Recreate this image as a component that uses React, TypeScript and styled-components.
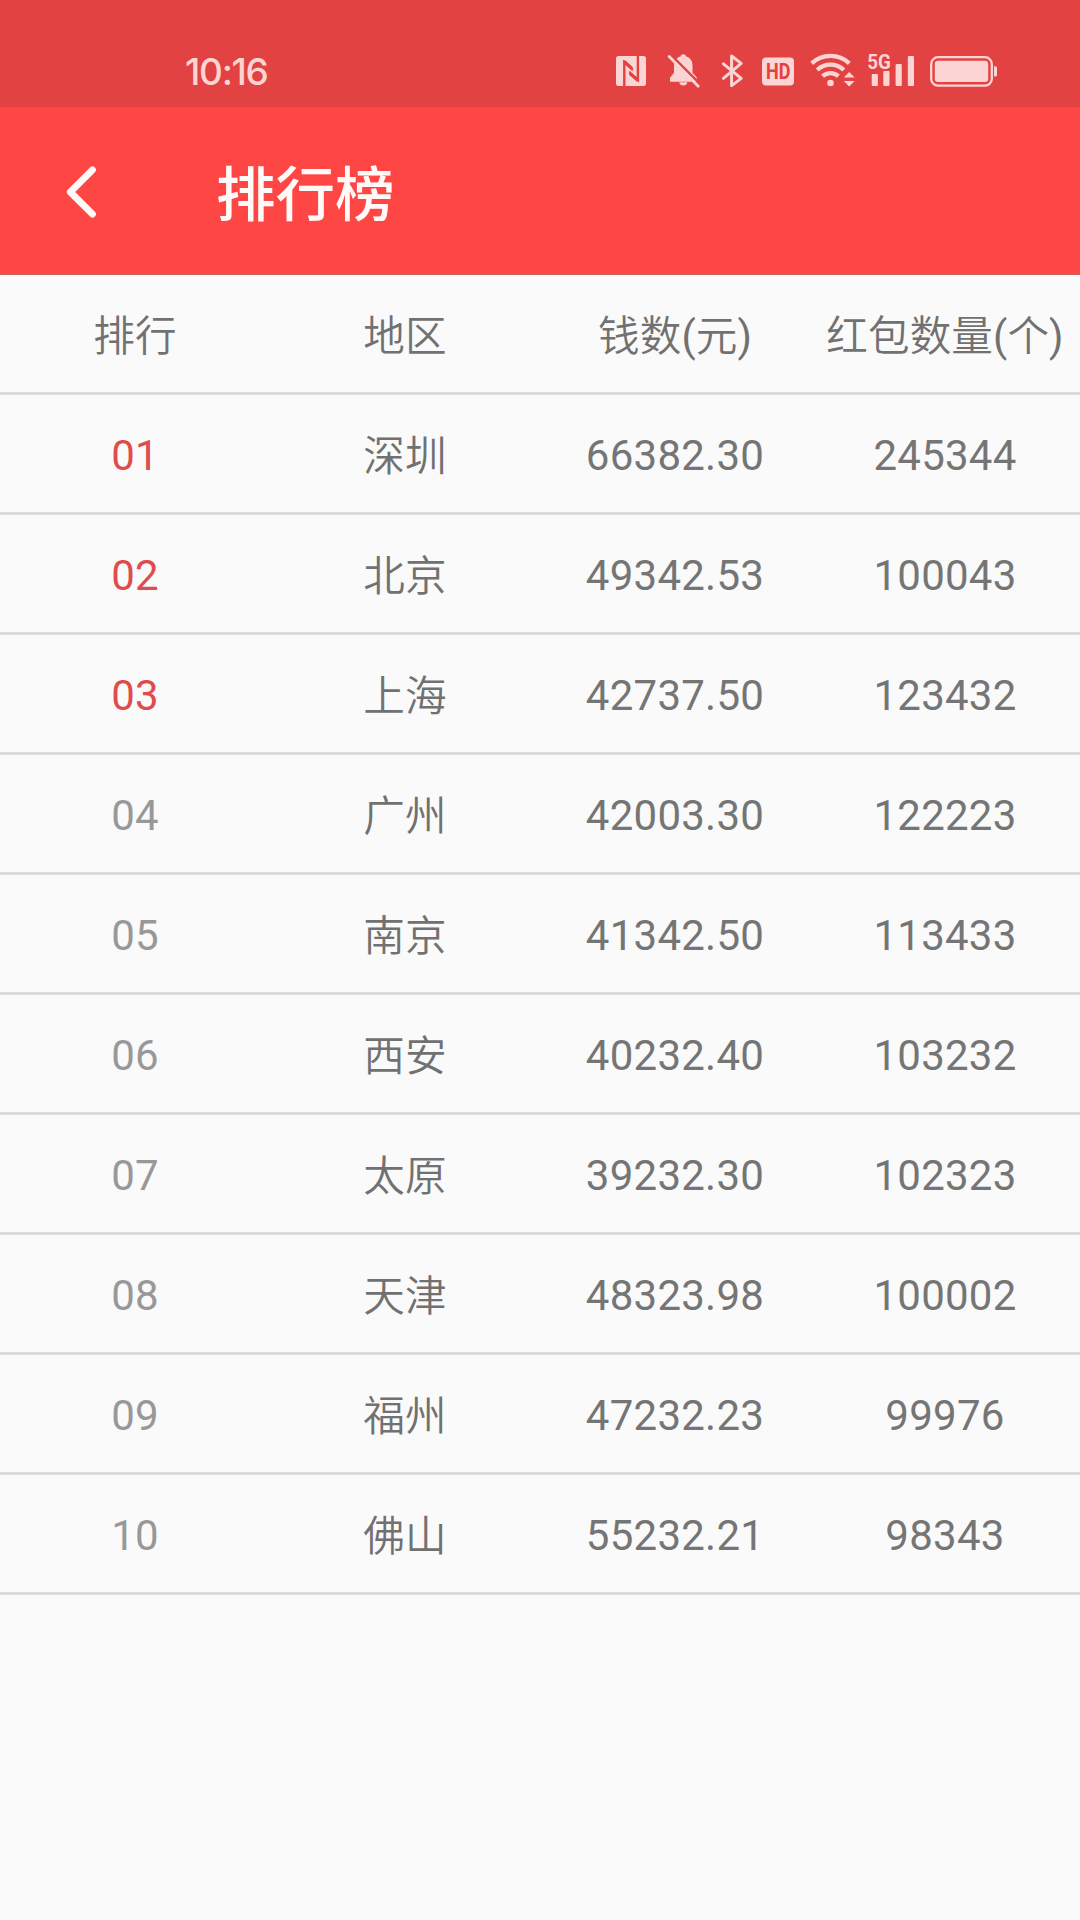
import React from "react";
import styled, { createGlobalStyle } from "styled-components";

const INK = "#fcd4d3";
const BAR = "#e24241";

const GlobalStyle = createGlobalStyle`
  body {
    margin: 0;
    background: #fafafa;
  }
`;

const Screen = styled.div`
  display: flex;
  flex-direction: column;
  width: 1080px;
  height: 1920px;
  overflow: hidden;
  background: #fafafa;
  font-family: Roboto, "Noto Sans CJK SC", sans-serif;
`;

const StatusBar = styled.div`
  display: flex;
  align-items: center;
  justify-content: space-between;
  box-sizing: border-box;
  height: 107px;
  padding: 35px 83px 0 185px;
  background: ${BAR};
`;

const Clock = styled.span`
  padding-top: 1px;
  font-family: Inter, sans-serif;
  font-size: 37px;
  font-weight: 500;
  line-height: 44px;
  letter-spacing: -1.3px;
  color: ${INK};
`;

const StatusIcons = styled.div`
  display: flex;
  align-items: center;
`;

const Glyph = styled.svg<{ $gap?: number }>`
  display: block;
  flex: none;
  height: 40px;
  margin-left: ${(p) => p.$gap ?? 0}px;
  fill: ${INK};
`;

const AppBar = styled.header`
  display: flex;
  align-items: center;
  box-sizing: border-box;
  height: 168px;
  padding: 3px 0 0 60px;
  background: #fe4645;
  border-bottom: 1px solid #c8605d;
`;

const BackButton = styled.button`
  display: flex;
  width: 156px;
  padding: 0;
  border: 0;
  background: none;
`;

const Title = styled.h1`
  margin: 0;
  padding-top: 7px;
  font-size: 59.5px;
  font-weight: 500;
  line-height: 80px;
  color: #fffaf8;
`;

const Table = styled.div`
  display: flex;
  flex-direction: column;
`;

const Row = styled.div`
  display: grid;
  grid-template-columns: repeat(4, 270px);
  align-items: center;
  box-sizing: border-box;
  height: 120px;
  border-bottom: 3px solid #dcdcdc;
`;

const Cell = styled.span`
  padding-top: 4px;
  font-size: 42px;
  line-height: 60px;
  letter-spacing: 0.25px;
  text-align: center;
  white-space: nowrap;
  color: #757575;
`;

const Rank = styled(Cell)<{ $top: boolean }>`
  color: ${(p) => (p.$top ? "#e04c4c" : "#989898")};
`;

const Label = styled(Cell)`
  padding-top: 7px;
  font-size: 41.6px;
  font-weight: 350;
  letter-spacing: 0.1px;
  color: #717171;
`;

const Bracket = styled.span`
  font-weight: 400;
`;

const HEADINGS: { name: string; unit?: string }[] = [
  { name: "排行" },
  { name: "地区" },
  { name: "钱数", unit: "元" },
  { name: "红包数量", unit: "个" },
];

const RANKING: [string, string, string][] = [
  ["深圳", "66382.30", "245344"],
  ["北京", "49342.53", "100043"],
  ["上海", "42737.50", "123432"],
  ["广州", "42003.30", "122223"],
  ["南京", "41342.50", "113433"],
  ["西安", "40232.40", "103232"],
  ["太原", "39232.30", "102323"],
  ["天津", "48323.98", "100002"],
  ["福州", "47232.23", "99976"],
  ["佛山", "55232.21", "98343"],
];

const NfcIcon = () => (
  <Glyph width="30" viewBox="0 0 30 40">
    <rect y="5" width="30" height="30" rx="2.5" />
    <g fill="none" stroke={BAR} strokeWidth="2.4">
      <path d="M8.3 35V11.2L16.6 18.6" />
      <path d="M21.9 5V28.8L13.4 21.4" />
    </g>
    <path d="M7.1 9.5h2.4l7.2 6.4v4.4L7.1 11.8zM23.1 30.5h-2.4l-7.4-6.4v-4.4l9.8 8.7z" fill={BAR} />
  </Glyph>
);

const MutedBellIcon = () => (
  <Glyph $gap={21} width="33" viewBox="0 0 33 40">
    <path d="M16.3 3.2c1.8 0 2.7 1 2.9 2.3 4.2 1.2 6.3 4.5 6.3 9v7.3l4.2 4.5v4.5H3v-4.1l4-4.9v-7.3c0-4.5 2.3-7.8 6.4-9 .2-1.3 1.1-2.3 2.9-2.3z" />
    <path d="M12.3 31.2h8c0 2-1.6 3.2-4 3.2s-4-1.2-4-3.2z" />
    <path d="M3.5 3.3 33 33" stroke={BAR} strokeWidth="2.4" />
    <path d="M2.2 5.6 31.2 35.2" stroke={INK} strokeWidth="2.8" strokeLinecap="round" />
  </Glyph>
);

const BluetoothIcon = () => (
  <Glyph $gap={21} width="23" viewBox="0 0 23 40">
    <path
      d="M2.4 12.8 20.2 27.4 10.6 34.6V5l9.6 7.4L2.4 27.4"
      fill="none"
      stroke={INK}
      strokeWidth="3"
      strokeLinecap="round"
      strokeLinejoin="round"
    />
  </Glyph>
);

const HdIcon = () => (
  <Glyph $gap={18} width="32" viewBox="0 0 32 40">
    <rect y="6.5" width="32" height="28" rx="4" />
    <g transform="translate(4 0) scale(0.8 1)">
      <text x="0" y="28.5" fontFamily="Roboto, sans-serif" fontSize="22.5" fontWeight="700" fill={BAR}>
        HD
      </text>
    </g>
  </Glyph>
);

const WifiIcon = () => (
  <Glyph $gap={16} width="45" viewBox="0 0 45 40">
    <g fill="none" stroke={INK} strokeWidth="4.3">
      <path d="M1.7 12.4a27.5 27.5 0 0 1 37.6 0" />
      <path d="M7.2 19a19.2 19.2 0 0 1 26.6 0" />
      <path d="M12.6 25.3a11.6 11.6 0 0 1 15.8 0" />
    </g>
    <circle cx="20.5" cy="32" r="3.3" />
    <path d="M33.8 26.6h10.8L39.2 21zM33.8 30h10.8l-5.4 5.4z" />
  </Glyph>
);

const SignalIcon = () => (
  <Glyph $gap={13} width="46" viewBox="0 0 46 40">
    <g transform="translate(-0.8 0) scale(0.92 1)">
      <text x="0" y="18" fontFamily="Roboto, sans-serif" fontSize="20.5" fontWeight="700">
        5G
      </text>
    </g>
    <rect x="3.7" y="23" width="6.2" height="12" rx="1" />
    <rect x="15.3" y="20" width="6.2" height="15" rx="1" />
    <rect x="27.6" y="13" width="6.2" height="22" rx="1" />
    <rect x="39.8" y="5" width="6.2" height="30" rx="1" />
  </Glyph>
);

const BatteryIcon = () => (
  <Glyph $gap={16} width="67" viewBox="0 0 67 40">
    <rect x="1.2" y="6.2" width="60.6" height="28.4" rx="6.8" fill="none" stroke={INK} strokeWidth="2.3" />
    <rect x="4.8" y="9.8" width="53.4" height="21.2" rx="3.2" />
    <path d="M64 15.3h1.4q1.6 0 1.6 1.6v7q0 1.6-1.6 1.6H64z" />
  </Glyph>
);

const BackIcon = () => (
  <svg width="42" height="60" viewBox="0 0 42 60">
    <path
      d="M32.5 7.8 10.3 30 32.5 52.2"
      fill="none"
      stroke="#fffaf8"
      strokeWidth="6.8"
      strokeLinecap="round"
      strokeLinejoin="round"
    />
  </svg>
);

export default function App() {
  return (
    <Screen>
      <GlobalStyle />
      <StatusBar>
        <Clock>10:16</Clock>
        <StatusIcons>
          <NfcIcon />
          <MutedBellIcon />
          <BluetoothIcon />
          <HdIcon />
          <WifiIcon />
          <SignalIcon />
          <BatteryIcon />
        </StatusIcons>
      </StatusBar>
      <AppBar>
        <BackButton aria-label="返回">
          <BackIcon />
        </BackButton>
        <Title>排行榜</Title>
      </AppBar>
      <Table>
        <Row>
          {HEADINGS.map(({ name, unit }) => (
            <Label key={name}>
              {name}
              {unit && (
                <>
                  <Bracket>(</Bracket>
                  {unit}
                  <Bracket>)</Bracket>
                </>
              )}
            </Label>
          ))}
        </Row>
        {RANKING.map(([city, amount, count], index) => (
          <Row key={city}>
            <Rank $top={index < 3}>{String(index + 1).padStart(2, "0")}</Rank>
            <Label>{city}</Label>
            <Cell>{amount}</Cell>
            <Cell>{count}</Cell>
          </Row>
        ))}
      </Table>
    </Screen>
  );
}
